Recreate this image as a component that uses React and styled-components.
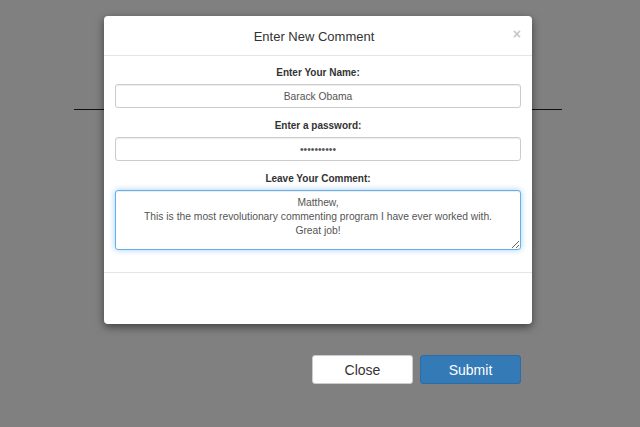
import { styled, createGlobalStyle } from "styled-components";

const GlobalStyle = createGlobalStyle`
  html, body {
    margin: 0;
    padding: 0;
    background: #808080;
    font-family: "Liberation Sans", Arial, sans-serif;
  }
`;

const Pagina = styled.div`
  position: relative;
  width: 640px;
  height: 427px;
  overflow: hidden;
  display: flex;
  flex-direction: column;
`;
const Linea = styled.div`
  margin: 109px 0 0 74px;
  width: 488px;
  height: 1px;
  background: #111;
`;
const FilaBotones = styled.div`
  display: flex;
  justify-content: flex-end;
  gap: 7px;
  margin-top: 245px;
  padding-right: 119px;
`;
const Boton = styled.button`
  width: 101px;
  height: 29px;
  border-radius: 3px;
  font-family: "Liberation Sans", Arial, sans-serif;
  font-size: 14px;
  border: 1px solid ${(p) => (p.$primario ? "#2e6da4" : "#ccc")};
  background: ${(p) => (p.$primario ? "#337ab7" : "#fff")};
  color: ${(p) => (p.$primario ? "#fff" : "#333")};
  padding: 0;
`;
const Modal = styled.div`
  position: absolute;
  top: 16px;
  left: 104px;
  width: 428px;
  height: 308px;
  background: #fff;
  border-radius: 4px;
  box-shadow: 0 3px 9px rgba(0, 0, 0, 0.5);
  display: flex;
  flex-direction: column;
`;
const Cabecera = styled.div`
  position: relative;
  height: 39px;
  border-bottom: 1px solid #e5e5e5;
  display: flex;
  align-items: center;
  justify-content: center;
`;
const Titulo = styled.h4`
  margin: 0 8px 0 0;
  font-size: 13px;
  font-weight: normal;
  color: #333;
  padding-top: 1px;
`;
const Cerrar = styled.span`
  position: absolute;
  right: 11px;
  top: 10px;
  font-size: 14px;
  font-weight: bold;
  color: #c8c8c8;
`;
const Cuerpo = styled.div`
  padding: 10px 11px 22px;
  display: flex;
  flex-direction: column;
  gap: 11px;
  border-bottom: 1px solid #e5e5e5;
`;
const Grupo = styled.div`
  display: flex;
  flex-direction: column;
  gap: 4px;
`;
const Etiqueta = styled.label`
  text-align: center;
  font-size: 10px;
  line-height: 14px;
  font-weight: bold;
  color: #333;
`;
const Campo = styled.input`
  box-sizing: border-box;
  height: 24px;
  width: 100%;
  border: 1px solid #ccc;
  border-radius: 3px;
  box-shadow: inset 0 1px 1px rgba(0, 0, 0, 0.075);
  text-align: center;
  font-family: "Liberation Sans", Arial, sans-serif;
  font-size: 10.3px;
  color: #555;
  padding: 0 6px;
  outline: none;
`;
const Comentario = styled.textarea`
  box-sizing: border-box;
  height: 60px;
  width: 100%;
  border: 1px solid #66afe9;
  border-radius: 3px;
  box-shadow: inset 0 1px 1px rgba(0, 0, 0, 0.075), 0 0 6px rgba(102, 175, 233, 0.6);
  text-align: center;
  font-family: "Liberation Sans", Arial, sans-serif;
  font-size: 10.3px;
  line-height: 14px;
  color: #555;
  padding: 5px 6px;
  outline: none;
  resize: vertical;
`;

export default function App() {
  return (
    <>
      <GlobalStyle />
      <Pagina>
        <Linea />
        <FilaBotones>
          <Boton>Close</Boton>
          <Boton $primario>Submit</Boton>
        </FilaBotones>
        <Modal>
          <Cabecera>
            <Titulo>Enter New Comment</Titulo>
            <Cerrar>×</Cerrar>
          </Cabecera>
          <Cuerpo>
            <Grupo>
              <Etiqueta>Enter Your Name:</Etiqueta>
              <Campo defaultValue="Barack Obama" />
            </Grupo>
            <Grupo>
              <Etiqueta>Enter a password:</Etiqueta>
              <Campo type="password" defaultValue="abcdefghij" />
            </Grupo>
            <Grupo>
              <Etiqueta>Leave Your Comment:</Etiqueta>
              <Comentario
                defaultValue={
                  "Matthew,\nThis is the most revolutionary commenting program I have ever worked with.\nGreat job!"
                }
              />
            </Grupo>
          </Cuerpo>
        </Modal>
      </Pagina>
    </>
  );
}
